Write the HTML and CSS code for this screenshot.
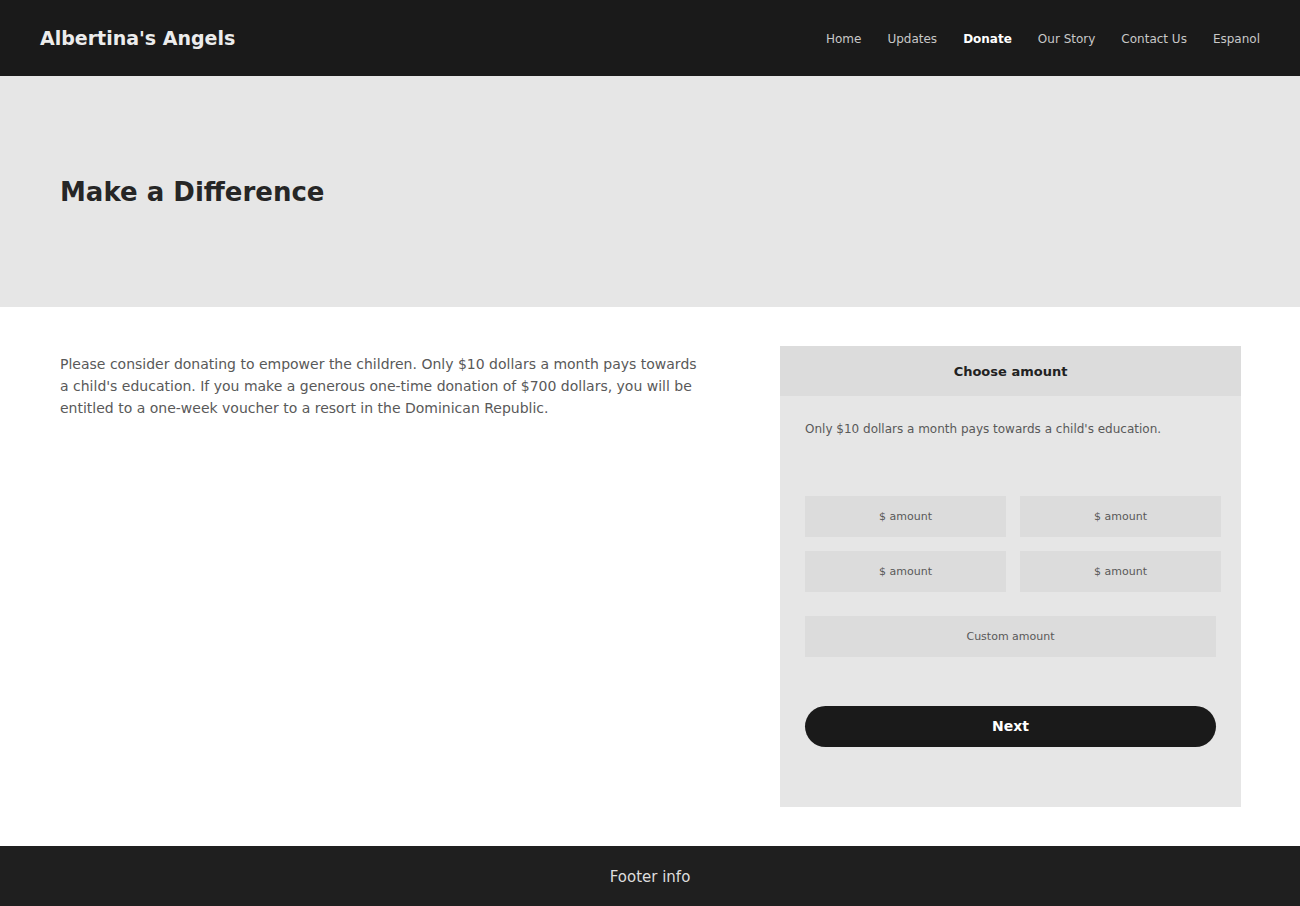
FILE: index.html
```html
<!DOCTYPE html>
<html lang="en">
<head>
<meta charset="utf-8">
<title>Albertina's Angels - Donate</title>
<link rel="stylesheet" href="styles.css">
</head>
<body>
<header class="topbar">
  <div class="brand">Albertina's Angels</div>
  <nav class="nav">
    <a href="#">Home</a>
    <a href="#">Updates</a>
    <a href="#" class="active">Donate</a>
    <a href="#">Our Story</a>
    <a href="#">Contact Us</a>
    <a href="#">Espanol</a>
  </nav>
</header>
<section class="hero">
  <h1>Make a Difference</h1>
</section>
<main class="content">
  <p class="intro">Please consider donating to empower the children. Only $10 dollars a month pays towards a child's education. If you make a generous one-time donation of $700 dollars, you will be entitled to a one-week voucher to a resort in the Dominican Republic.</p>
  <div class="card">
    <div class="card-head">Choose amount</div>
    <div class="card-body">
      <p class="note">Only $10 dollars a month pays towards a child's education.</p>
      <div class="amounts">
        <button class="amt">$ amount</button>
        <button class="amt">$ amount</button>
        <button class="amt">$ amount</button>
        <button class="amt">$ amount</button>
      </div>
      <button class="custom">Custom amount</button>
      <button class="next">Next</button>
    </div>
  </div>
</main>
<footer class="footer">Footer info</footer>
</body>
</html>
```
FILE: styles.css
```css
* { box-sizing: border-box; }
html, body { margin: 0; padding: 0; }
body {
  font-family: "DejaVu Sans", "Liberation Sans", sans-serif;
  background: #ffffff;
  color: #595959;
}
.topbar {
  height: 76px;
  background: #1a1a1a;
  display: flex;
  align-items: center;
  justify-content: space-between;
  padding: 0 40px;
}
.brand {
  color: #ececec;
  font-weight: bold;
  font-size: 19px;
}
.nav {
  display: flex;
  gap: 26px;
  padding-top: 2px;
}
.nav a {
  color: #c8c8c8;
  text-decoration: none;
  font-size: 12px;
}
.nav a.active {
  color: #ffffff;
  font-weight: bold;
}
.hero {
  height: 231px;
  background: #e6e6e6;
  display: flex;
  align-items: center;
  padding: 0 60px;
}
.hero h1 {
  margin: 0;
  font-size: 26px;
  font-weight: bold;
  color: #262626;
}
.content {
  display: flex;
  align-items: flex-start;
  gap: 80px;
  padding: 39px 59px 39px 60px;
}
.intro {
  flex: 1;
  margin: 7px 0 0;
  font-size: 14px;
  line-height: 22px;
  color: #595959;
}
.card {
  width: 461px;
  flex: none;
  background: #e6e6e6;
}
.card-head {
  height: 50px;
  background: #dcdcdc;
  display: flex;
  align-items: center;
  justify-content: center;
  font-weight: bold;
  font-size: 13px;
  color: #222222;
}
.card-body {
  padding: 26px 25px 60px;
}
.note {
  margin: 0 0 59px;
  font-size: 12px;
  line-height: 15px;
  color: #595959;
}
.amounts {
  display: grid;
  grid-template-columns: 201px 201px;
  gap: 14px;
  width: 416px;
}
button {
  font-family: inherit;
  border: none;
  cursor: pointer;
}
.amt, .custom {
  height: 41px;
  background: #dcdcdc;
  color: #595959;
  font-size: 11px;
}
.custom {
  display: block;
  width: 100%;
  margin-top: 24px;
}
.next {
  display: block;
  width: 100%;
  height: 41px;
  margin-top: 49px;
  padding-bottom: 2px;
  border-radius: 21px;
  background: #1a1a1a;
  color: #ffffff;
  font-weight: bold;
  font-size: 14px;
}
.footer {
  height: 60px;
  padding-top: 2px;
  background: #1f1f1f;
  color: #dddddd;
  font-size: 15px;
  display: flex;
  align-items: center;
  justify-content: center;
}
```
